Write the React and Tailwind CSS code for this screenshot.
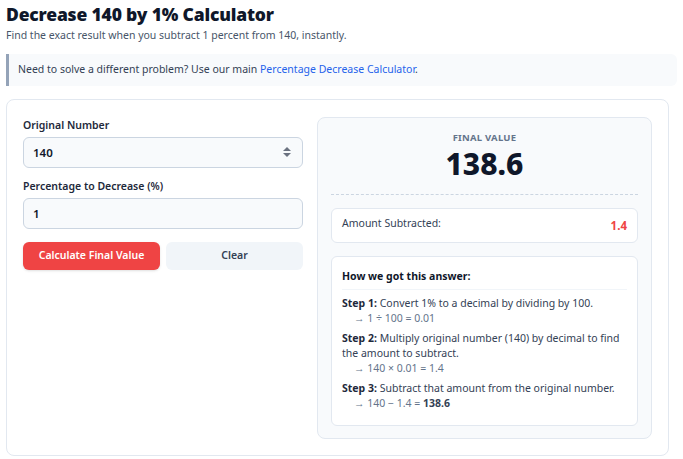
import React, { useState } from 'react'

export default function App() {
  const [num, setNum] = useState('140')
  const [pct, setPct] = useState('1')

  return (
    <div className="min-h-screen bg-white px-[6px] pt-[3px] text-[#1e293b]" style={{ fontFamily: '"Noto Sans", "Open Sans", sans-serif' }}>
      <h1 className="text-[17.5px] font-black leading-[22px] tracking-[-0.01em] text-[#0f172a]">Decrease 140 by 1% Calculator</h1>
      <p className="mt-[2px] text-[10.5px] leading-[16px] text-[#475569]">Find the exact result when you subtract 1 percent from 140, instantly.</p>

      <div className="mt-[11px] flex h-[32px] items-center rounded-r-md border-l-[3px] border-[#94a3b8] bg-[#f8fafc] pl-[9px] text-[10.5px] text-[#334155]">
        <span>
          Need to solve a different problem? Use our main{' '}
          <a href="#" className="text-[#2563eb]">Percentage Decrease Calculator</a>.
        </span>
      </div>

      <div className="mr-[8px] mt-[13px] grid grid-cols-[280px_1fr] items-start gap-[14px] rounded-lg border border-[#e2e8f0] pb-[16px] pl-[16px] pr-[16px] pt-[17px]">
        <div>
          <label className="block pt-[1px] text-[10.5px] font-semibold leading-[14px] text-[#1e293b]">Original Number</label>
          <div className="relative mt-[5px]">
            <input
              value={num}
              onChange={(e) => setNum(e.target.value)}
              className="h-[31px] w-full rounded-md border border-[#cbd5e1] bg-[#f8fafc] px-[9px] text-[11.5px] font-semibold text-[#0f172a] outline-none"
            />
            <div className="absolute right-[12px] top-[10px] flex flex-col gap-[2px]">
              <div className="h-0 w-0 border-x-[4px] border-b-[4px] border-x-transparent border-b-[#6b7280]" />
              <div className="h-0 w-0 border-x-[4px] border-t-[4px] border-x-transparent border-t-[#6b7280]" />
            </div>
          </div>
          <label className="mt-[11px] block text-[10.5px] font-semibold leading-[14px] text-[#1e293b]">Percentage to Decrease (%)</label>
          <input
            value={pct}
            onChange={(e) => setPct(e.target.value)}
            className="mt-[5px] h-[31px] w-full rounded-md border border-[#cbd5e1] bg-[#f8fafc] px-[9px] text-[11.5px] font-semibold text-[#0f172a] outline-none"
          />
          <div className="mt-[13px] grid grid-cols-2 gap-[6px]">
            <button className="h-[28px] rounded-md bg-[#ef4444] text-[10.5px] font-semibold text-white shadow-sm">Calculate Final Value</button>
            <button className="h-[28px] rounded-md bg-[#f1f5f9] text-[10.5px] font-semibold text-[#334155]">Clear</button>
          </div>
        </div>

        <div className="rounded-lg border border-[#e2e8f0] bg-[#f8fafc] px-[13px] pb-[12px] pt-[14px]">
          <div className="text-center text-[9.5px] font-bold uppercase leading-[12px] tracking-wide text-[#64748b]">Final Value</div>
          <div className="mt-[2px] text-center text-[30px] font-extrabold leading-[36px] text-[#0f172a]">138.6</div>
          <div className="mt-[12px] border-t border-dashed border-[#cbd5e1]" />
          <div className="mt-[13px] flex h-[35px] items-center justify-between rounded-md border border-[#e2e8f0] bg-white px-[10px]">
            <span className="-mt-[3px] text-[10.5px] text-[#334155]">Amount Subtracted:</span>
            <span className="text-[11.5px] font-bold text-[#ef4444]">1.4</span>
          </div>
          <div className="mt-[13px] rounded-md border border-[#e2e8f0] bg-white px-[10px] pb-[14px] pt-[12px] text-[10.5px] leading-[15px] text-[#334155]">
            <div className="border-b border-[#f1f5f9] pb-[5px] font-bold text-[#0f172a]">How we got this answer:</div>
            <div className="mt-[6px]">
              <p><b className="text-[#1e293b]">Step 1:</b> Convert 1% to a decimal by dividing by 100.</p>
              <p className="pl-[12px] text-[#64748b]">→ 1 ÷ 100 = 0.01</p>
            </div>
            <div className="mt-[5px]">
              <p><b className="text-[#1e293b]">Step 2:</b> Multiply original number (140) by decimal to find the amount to subtract.</p>
              <p className="pl-[12px] text-[#64748b]">→ 140 × 0.01 = 1.4</p>
            </div>
            <div className="mt-[5px]">
              <p><b className="text-[#1e293b]">Step 3:</b> Subtract that amount from the original number.</p>
              <p className="pl-[12px] text-[#64748b]">→ 140 − 1.4 = <b className="text-[#334155]">138.6</b></p>
            </div>
          </div>
        </div>
      </div>
    </div>
  )
}
